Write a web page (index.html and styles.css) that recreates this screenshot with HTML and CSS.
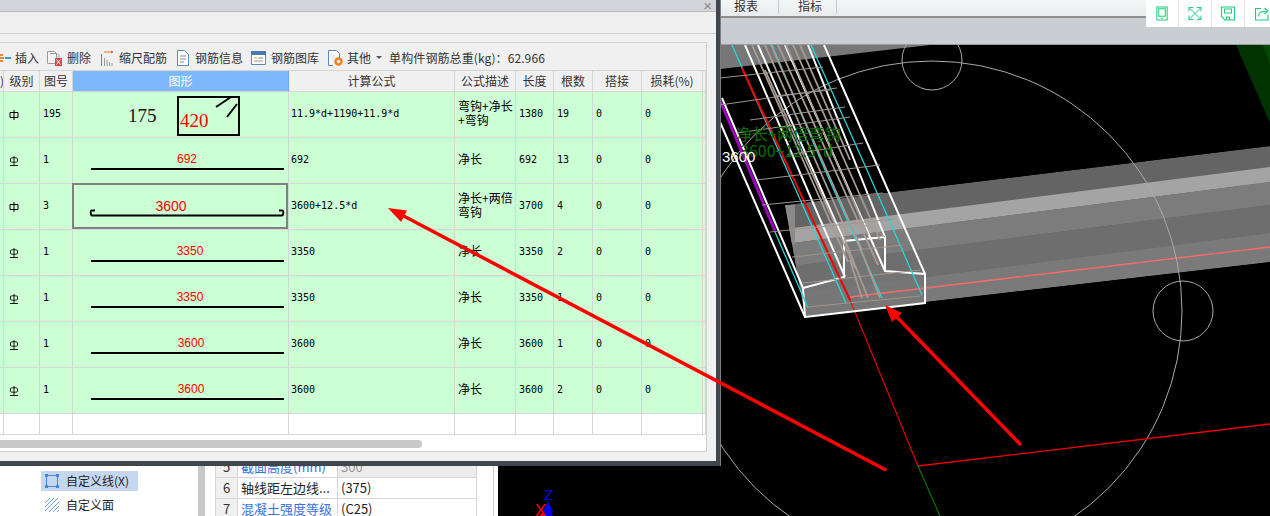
FILE: index.html
```html
<!DOCTYPE html>
<html lang="zh-CN">
<head>
<meta charset="utf-8">
<title>钢筋编辑</title>
<link rel="stylesheet" href="styles.css">
</head>
<body>
<svg class="defs" aria-hidden="true">
  <symbol id="grade-a" viewBox="0 0 10 10"><path d="M1 2.500h8v5H1zM5 0v10" fill="none" stroke="#000" stroke-width="1"/></symbol>
  <symbol id="grade-b" viewBox="0 0 10 10"><path d="M1.500 2.500c0-1 7-1 7 0v3c0 1-7 1-7 0zM5 0v9.500M1 9.500h8" fill="none" stroke="#000" stroke-width=".9"/></symbol>
</svg>
<div class="workspace">
  <div class="left-pane">
    <div class="tree">
      <div class="tree-row tree-row-active">
        <svg class="tree-icon" viewBox="0 0 14 14"><path d="M1.500 1.500h11v11h-11z" fill="none" stroke="#3f8ae0"/><path d="M0 0h3v3H0zM11 0h3v3h-3zM0 11h3v3H0zM11 11h3v3h-3z" fill="#3f8ae0"/></svg>
        <span>自定义线(X)</span>
      </div>
      <div class="tree-row">
        <svg class="tree-icon" viewBox="0 0 14 14"><path d="M0 5 5 0M0 9 9 0M0 13 13 0M4 14 14 4M8 14l6-6M12 14l2-2" stroke="#6d9fe0" fill="none"/></svg>
        <span>自定义面</span>
      </div>
    </div>
    <div class="pane-scroll"></div>
    <table class="props">
      <tr class="props-row-grey"><td class="props-num">5</td><td class="props-link">截面高度(mm)</td><td class="props-muted">300</td></tr>
      <tr><td class="props-num">6</td><td>轴线距左边线...</td><td>(375)</td></tr>
      <tr><td class="props-num">7</td><td class="props-link">混凝土强度等级</td><td>(C25)</td></tr>
    </table>
    <div class="pane-edge"></div>
  </div>
  <div class="view">
    <div class="tabs">
      <span class="tab">报表</span>
      <span class="tab tab-second">指标</span>
    </div>
    <div class="ribbon"></div>
    <svg class="scene" viewBox="498 45 772 471">
      <defs><clipPath id="beam-clip"><path d="M785 205 1270 146v116L925 302 805 316z"/></clipPath></defs>
      <rect x="498" y="45" width="772" height="471" fill="#000"/>
      <path d="M720 45h210L720 69z" fill="#777"/>
      <path d="M1236 45h34v78z" fill="#003300"/>
      <path d="M1263 45h7v20z" fill="#004a00"/>
      <g clip-path="url(#beam-clip)">
        <path d="M785 205 1270 146v116L925 302 805 316z" fill="#646464"/>
        <path d="M785 229 1270 167v15L785 244z" fill="#a4a4a4"/>
        <path d="M785 244 1270 182v23L785 267z" fill="#7c7c7c"/>
        <path d="M785 267 1270 205v28L785 295z" fill="#6e6e6e"/>
        <path d="M785 295 1270 233v29L925 302 805 316z" fill="#7a7a7a"/>
        <path d="M785 205h10v40h-10z" fill="#8a8a8a"/>
      </g>
      <path d="M803 288 844 277V241L885 237V271L925 274V303L805 317z" fill="#777" fill-opacity=".75"/>
      <path d="M850 297 1270 247" stroke="#ff6a6a" fill="none" stroke-width="1.300"/>
      <g fill="none" stroke="#aaa" stroke-width="1">
        <circle cx="932" cy="311" r="250"/>
        <circle cx="932" cy="60" r="30"/>
        <circle cx="1183" cy="311" r="30"/>
      </g>
      <path d="M850 300 918 466" stroke="#f00000" fill="none" stroke-width="1.100"/>
      <path d="M918 466 1270 424" stroke="#f00000" fill="none" stroke-width="1.300"/>
      <path d="M918 466 940 516" stroke="#008000" fill="none" stroke-width="1.100"/>
      <g fill="none" stroke="#fff" stroke-width="2">
        <path d="M720 122 805 317M722 98 803 288M745 45 845 277M758 45 844 241M785 45 885 271M808 45 885 237M824 45 925 274"/>
        <path d="M805 317 925 303V274L885 271V237L844 241V277L803 288z"/>
      </g>
      <g fill="none" stroke="#22d8dc" stroke-width="1.300">
        <path d="M732 45 787 170 846 303M772 45 825 170 882 298M811 45 867 170 922 295M775 232 808 308"/>
      </g>
      <path d="M742 68 850 300" stroke="#f00000" fill="none" stroke-width="2"/>
      <path d="M720 100 775 231" stroke="#a000c0" fill="none" stroke-width="3"/>
      <g fill="none" stroke="#9c948c" stroke-width="1">
        <path d="M720 78 823 67M720 105 837 88M737 133 850 117M757 180 880 165M762 205 883 193M792 257 903 245M803 283 920 270M807 307 920 296M787 155 863 143M770 232 895 219M750 120 845 107M775 96 830 90"/>
      </g>
      <g fill="none" stroke="#a89c94" stroke-width="1.800">
        <path d="M752 45 848 262M765 45 848 235M771 45 862 250M778 45 878 265M786 45 868 235M793 45 880 240M800 45 850 160M765 70 855 268"/>
        <path d="M845 240 868 298M857 240 880 298M850 260 862 298"/>
      </g>
      <path d="M840 227 847 226H870L885 237M844 241 847 226" stroke="#a89c94" fill="none"/>
      <text class="scene-green" x="736" y="140">净长+两倍弯钩</text>
      <text class="scene-green" x="740" y="157">3600+12.5*d</text>
      <text class="scene-white" x="722" y="162">3600</text>
      <text class="axis-z" x="544" y="500">Z</text>
      <text class="axis-x" x="535" y="516">X</text>
      <path d="M548 501 553 512H551L553 516H543L545 512H543z" fill="#0000f0"/>
      <circle cx="543" cy="516" r="3" fill="#f00"/>
    </svg>
  </div>
</div>

<div class="quick">
  <div class="quick-cell"><svg viewBox="0 0 14 16"><path d="M1.500 1h11v14h-11zM3.500 3h7v8h-7zM6 13h2" fill="none" stroke="#1ecb7c" stroke-width="1.100"/></svg></div>
  <div class="quick-cell"><svg viewBox="0 0 14 14"><path d="M1 5V1h4M9 1h4v4M13 9v4H9M5 13H1V9M1 1l12 12M13 1 1 13" fill="none" stroke="#1ecb7c" stroke-width="1"/></svg></div>
  <div class="quick-cell"><svg viewBox="0 0 14 14"><path d="M.500.500h13v13H4l-3.500-3.500zM3.500 2.500h7v4h-7zM5.500 13.500v-3h3v3" fill="none" stroke="#1ecb7c" stroke-width="1.100"/></svg></div>
  <div class="quick-cell"><svg viewBox="0 0 14 14"><path d="M13 8v5.500H.500V2H6M3.500 10c0-4 3-5.500 8-5.500M9.500 1.500l3.500 3-3.500 3" fill="none" stroke="#1ecb7c" stroke-width="1.100"/></svg></div>
</div>

<div class="dialog">
  <div class="dialog-title"><span class="dialog-close">×</span></div>
  <div class="dialog-strip"></div>
  <div class="panel">
    <div class="toolbar">
      <div class="tool tool-insert">
        <svg class="tool-icon-insert" viewBox="0 0 11 16"><path d="M0 4h3v2H0zM0 7h4v2H0zM0 10h3v2H0z" fill="#e8883a"/><path d="M5 7h6v2H5z" fill="#3a9bd8"/></svg>
        <span>插入</span>
      </div>
      <div class="tool tool-delete">
        <svg class="tool-icon" viewBox="0 0 15 16"><path d="M.500 1.500h7l2 2v10h-9z" fill="#f4f4f4" stroke="#9a9a9a"/><path d="M3 3.500h7l2 2V8" fill="none" stroke="#9a9a9a"/><path d="M8 8h7v8H8z" fill="#d84848"/><path d="M9.500 9.500l4 5M13.500 9.500l-4 5" stroke="#fff"/></svg>
        <span>删除</span>
      </div>
      <div class="tool">
        <svg class="tool-icon-narrow" viewBox="0 0 13 16"><path d="M3 2h9" stroke="#e07030"/><path d="M10 .500 12.500 2 10 3.500z" fill="#e07030"/><path d="M.500 4v12" stroke="#4a8ac0"/><path d="M3.500 8v8M6 10v6M8.500 12v4M11 13v3" stroke="#999"/></svg>
        <span>缩尺配筋</span>
      </div>
      <div class="tool tool-info">
        <svg class="tool-icon-doc" viewBox="0 0 14 16"><path d="M1.500.500h7l4 4v11h-11z" fill="#fff" stroke="#5a87b8"/><path d="M4 6h6M4 9h6M4 12h4" stroke="#888"/></svg>
        <span>钢筋信息</span>
      </div>
      <div class="tool">
        <svg class="tool-icon" viewBox="0 0 15 14"><path d="M.500.500h14v13H.500z" fill="#fff" stroke="#5a87b8"/><path d="M0 0h15v4H0z" fill="#4a78b0"/><path d="M3 7h3" stroke="#d8a030"/><path d="M7 7h5" stroke="#70a070"/><path d="M3 10h9" stroke="#999"/></svg>
        <span>钢筋图库</span>
      </div>
      <div class="tool tool-other">
        <svg class="tool-icon" viewBox="0 0 15 16"><path d="M.500.500h8l3 3V8M5 15.500H.500V.500" fill="#fff" stroke="#5a87b8"/><circle cx="10.500" cy="11.500" r="3" fill="none" stroke="#f08020" stroke-width="2.400"/></svg>
        <span>其他</span>
        <span class="caret"></span>
      </div>
      <span class="tool-total">单构件钢筋总重(kg)：62.966</span>
    </div>
    <table class="grid">
      <colgroup>
        <col class="c0"><col class="c1"><col class="c2"><col class="c3"><col class="c4"><col class="c5"><col class="c6"><col class="c7"><col class="c8"><col class="c9"><col class="c10">
      </colgroup>
      <thead>
        <tr><th>)</th><th>级别</th><th>图号</th><th class="th-active">图形</th><th>计算公式</th><th>公式描述</th><th>长度</th><th>根数</th><th>搭接</th><th>损耗(%)</th><th></th></tr>
      </thead>
      <tbody>
        <tr>
          <td></td><td class="grade"><svg><use href="#grade-a"/></svg></td><td class="num">195</td>
          <td class="shape"><svg viewBox="0 0 215 45"><text class="dim-serif" x="55" y="30">175</text><rect x="105" y="5" width="61" height="38" fill="none" stroke="#000" stroke-width="2"/><text class="dim-serif dim-red" x="107" y="35">420</text><path d="M143 15 158 5M154 25 164 12" stroke="#000" stroke-width="2" fill="none"/></svg></td>
          <td class="num formula">11.9*d+1190+11.9*d</td><td class="desc">弯钩+净长<br>+弯钩</td><td class="num">1380</td><td class="num">19</td><td class="num">0</td><td class="num">0</td><td></td>
        </tr>
        <tr>
          <td></td><td class="grade"><svg><use href="#grade-b"/></svg></td><td class="num">1</td>
          <td class="shape"><svg viewBox="0 0 215 45"><text class="dim" x="114" y="25">692</text><path class="bar" d="M18 31H211"/></svg></td>
          <td class="num formula">692</td><td class="desc">净长</td><td class="num">692</td><td class="num">13</td><td class="num">0</td><td class="num">0</td><td></td>
        </tr>
        <tr>
          <td></td><td class="grade"><svg><use href="#grade-a"/></svg></td><td class="num">3</td>
          <td class="shape shape-selected"><svg viewBox="0 0 215 45"><text class="dim dim-large" x="98" y="27">3600</text><path class="bar" d="M22 26.500H18.500C17.500 26.500 17.500 31.500 19 31.500H209C210.500 31.500 210.500 26.500 209.500 26.500H206"/></svg></td>
          <td class="num formula">3600+12.5*d</td><td class="desc">净长+两倍<br>弯钩</td><td class="num">3700</td><td class="num">4</td><td class="num">0</td><td class="num">0</td><td></td>
        </tr>
        <tr>
          <td></td><td class="grade"><svg><use href="#grade-b"/></svg></td><td class="num">1</td>
          <td class="shape"><svg viewBox="0 0 215 45"><text class="dim" x="117" y="25">3350</text><path class="bar" d="M18 31H211"/></svg></td>
          <td class="num formula">3350</td><td class="desc">净长</td><td class="num">3350</td><td class="num">2</td><td class="num">0</td><td class="num">0</td><td></td>
        </tr>
        <tr>
          <td></td><td class="grade"><svg><use href="#grade-b"/></svg></td><td class="num">1</td>
          <td class="shape"><svg viewBox="0 0 215 45"><text class="dim" x="117" y="25">3350</text><path class="bar" d="M18 31H211"/></svg></td>
          <td class="num formula">3350</td><td class="desc">净长</td><td class="num">3350</td><td class="num">1</td><td class="num">0</td><td class="num">0</td><td></td>
        </tr>
        <tr>
          <td></td><td class="grade"><svg><use href="#grade-b"/></svg></td><td class="num">1</td>
          <td class="shape"><svg viewBox="0 0 215 45"><text class="dim" x="118" y="25">3600</text><path class="bar" d="M18 31H211"/></svg></td>
          <td class="num formula">3600</td><td class="desc">净长</td><td class="num">3600</td><td class="num">1</td><td class="num">0</td><td class="num">0</td><td></td>
        </tr>
        <tr>
          <td></td><td class="grade"><svg><use href="#grade-b"/></svg></td><td class="num">1</td>
          <td class="shape"><svg viewBox="0 0 215 45"><text class="dim" x="118" y="25">3600</text><path class="bar" d="M18 31H211"/></svg></td>
          <td class="num formula">3600</td><td class="desc">净长</td><td class="num">3600</td><td class="num">2</td><td class="num">0</td><td class="num">0</td><td></td>
        </tr>
        <tr class="row-empty"><td></td><td></td><td></td><td></td><td></td><td></td><td></td><td></td><td></td><td></td><td></td></tr>
      </tbody>
    </table>
    <div class="hscroll"><div class="hscroll-thumb"></div></div>
  </div>
</div>

<svg class="arrows" viewBox="0 0 1270 516">
  <path d="M885 469.500 398 213M1020 444 893 313" stroke="#ff0000" stroke-width="3.500" fill="none" stroke-linecap="round"/>
  <path d="M388 208 407 210.500 401 222zM885 305 902 313 892 322z" fill="#ff0000"/>
</svg>
</body>
</html>
```
FILE: styles.css
```css
* { box-sizing: border-box; }
html, body { margin: 0; padding: 0; }
body {
  position: relative;
  width: 1270px;
  height: 516px;
  overflow: hidden;
  background: #fff;
  font-family: "Noto Sans CJK SC", "Liberation Sans", sans-serif;
  font-size: 12px;
  color: #333;
}
.defs { position: absolute; width: 0; height: 0; }

/* Background application */
.workspace { display: grid; grid-template-columns: 498px 1fr; height: 516px; }
.left-pane { display: flex; height: 516px; overflow: hidden; background: #fff; padding-right: 4px; }
.tree { width: 198px; padding: 471px 0 0 41px; flex: none; }
.tree-row { display: flex; align-items: center; gap: 7px; width: 97px; height: 20px; padding-left: 4px; margin-bottom: 4px; color: #222; line-height: 20px; white-space: nowrap; }
.tree-row-active { background: #c5d7ef; }
.tree-icon { width: 14px; height: 14px; flex: none; }
.pane-scroll { width: 7px; background: #c8c8c8; flex: none; }
.props { width: 262px; margin: 456px 0 0 10px; border-collapse: collapse; table-layout: fixed; flex: none; height: 64px; font-size: 13px; color: #222; }
.props td { height: 21px; padding: 0 0 0 3px; border: 1px solid #d6d6d6; line-height: 18px; white-space: nowrap; overflow: hidden; }
.props td:first-child { width: 22px; }
.props td:nth-child(2) { width: 100px; }
.props .props-num { background: #f0f0f0; text-align: center; padding: 0; color: #333; }
.props .props-link { color: #3a70e0; }
.props .props-muted { background: #ececec; color: #999; }
.pane-edge { width: 1px; margin-left: 16px; background: #d0d0d0; flex: none; }

.view { display: flex; flex-direction: column; height: 516px; min-width: 0; }
.tabs { display: flex; height: 18px; padding-left: 222px; background: linear-gradient(#f4f6f6, #e8ecee); border-bottom: 2px solid #8e8e8e; overflow: hidden; }
.tab { width: 59px; padding-left: 14px; height: 14px; line-height: 12px; border-right: 1px solid #c8c8c8; color: #333; }
.tab-second { width: 58px; padding-left: 19px; }
.ribbon { height: 27px; background: #cacdd1; border-bottom: 1px solid #9a9da0; }
.scene { display: block; width: 772px; height: 471px; }
.scene-green { font: 16px "Noto Sans CJK SC", sans-serif; fill: #007000; }
.scene-white { font: 15px "Liberation Sans", sans-serif; fill: #fff; }
.axis-z { font: 15px "Liberation Sans", sans-serif; fill: #0000f0; }
.axis-x { font: 17px "Liberation Sans", sans-serif; fill: #f00; }

/* Quick action buttons, floating over the view */
.quick { position: absolute; top: 0; left: 1146px; display: flex; width: 124px; height: 27px; background: #fff; overflow: hidden; }
.quick-cell { display: flex; justify-content: center; align-items: center; flex: none; width: 33px; height: 27px; border-right: 1px solid #e4e4e4; }
.quick-cell svg { width: 14px; height: 15px; }
.quick-cell:last-child { border-right: 0; }

/* Floating dialog */
.dialog { position: absolute; left: 0; top: 0; width: 720px; height: 466px; background: #f0f0f0; border-right: 4px solid #3f464c; border-bottom: 5px solid #3f464c; box-shadow: 1px 0 0 #787e84; display: flex; flex-direction: column; }
.dialog-title { height: 12px; flex: none; background: #d4d5da; border-bottom: 1px solid #bcbcc0; display: flex; justify-content: flex-end; padding-right: 4px; }
.dialog-close { font: 15px/12px "Liberation Sans", sans-serif; color: #888; }
.dialog-strip { height: 22px; flex: none; border-bottom: 1px solid #d2d2d2; }
.panel { width: 707px; height: 410px; margin-top: 8px; flex: none; border: 1px solid #d0d0d0; border-left: 0; background: #fff; display: flex; flex-direction: column; overflow: hidden; }

.toolbar { display: flex; align-items: center; height: 28px; flex: none; background: #f0f0f0; border-bottom: 1px solid #d6d6d6; line-height: 16px; white-space: nowrap; padding-top: 2px; }
.tool { display: flex; align-items: center; gap: 5px; margin-right: 9px; }
.tool-insert { gap: 4px; margin-right: 8px; }
.tool-delete { margin-right: 10px; }
.tool-info { margin-right: 8px; }
.tool-other { gap: 4px; margin-right: 7px; }
.tool-icon { width: 15px; height: 16px; flex: none; }
.tool-icon-insert { width: 11px; height: 16px; flex: none; }
.tool-icon-narrow { width: 13px; height: 16px; flex: none; }
.tool-icon-doc { width: 14px; height: 16px; flex: none; }
.caret { width: 0; height: 0; margin-left: 1px; border: 3px solid transparent; border-top: 3px solid #555; border-bottom: 0; }
.tool-total { color: #333; font-size: 12px; letter-spacing: .1px; }

.grid { width: 706px; border-collapse: separate; border-spacing: 0; table-layout: fixed; flex: none; background: #ccffd4; }
.c0 { width: 4px; } .c1 { width: 36px; } .c2 { width: 33px; } .c3 { width: 216px; } .c4 { width: 166px; }
.c5 { width: 61px; } .c6 { width: 38px; } .c7 { width: 39px; } .c8 { width: 49px; } .c9 { width: 61px; } .c10 { width: 3px; }
.grid th { height: 21px; padding: 0; background: #f0f0f0; border-right: 1px solid #d6d6d6; border-bottom: 1px solid #d6d6d6; font-weight: 400; font-size: 12px; line-height: 16px; color: #333; overflow: hidden; white-space: nowrap; }
.grid th.th-active { background: #7db8fb; color: #fff; border-right-color: #6aa8ee; }
.grid td { height: 46px; padding: 0; border-right: 1px solid #d6d6d6; border-bottom: 1px solid #d6d6d6; color: #000; overflow: hidden; }
.grid .num { padding: 0 0 2px 3px; font: 10px/14px "DejaVu Sans Mono", "Liberation Mono", monospace; white-space: nowrap; }
.grid .formula { padding-left: 2px; }
.grid .desc { padding: 0 0 3px 3px; font-size: 12px; line-height: 14px; }
.grid .grade { padding-left: 5px; }
.grade svg { display: block; width: 10px; height: 10px; }
.grid .shape { overflow: visible; }
.shape svg { display: block; width: 215px; height: 45px; }
.grid .shape-selected { position: relative; }
.shape-selected::after { content: ""; position: absolute; left: -1px; top: -1px; right: 0; bottom: 0; border: 2px solid #808080; }
.grid .row-empty td { height: 21px; background: #fff; }
.bar { fill: none; stroke: #000; stroke-width: 2; }
.dim { font: 12px "Liberation Sans", sans-serif; fill: #f00; text-anchor: middle; }
.dim-large { font-size: 14px; }
.dim-serif { font: 19px "Liberation Serif", serif; fill: #111; }
.dim-red { fill: #f00; }

.hscroll { flex: 1; padding-top: 5px; background: #fff; }
.hscroll-thumb { width: 422px; height: 8px; background: #c8c8c8; border-radius: 0 4px 4px 0; }

.arrows { position: absolute; left: 0; top: 0; width: 1270px; height: 516px; pointer-events: none; }
```
